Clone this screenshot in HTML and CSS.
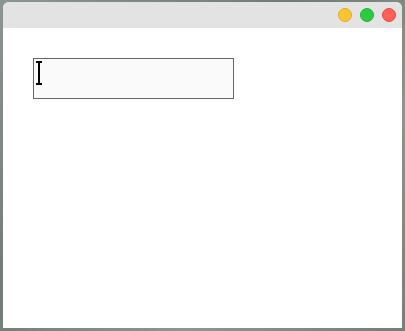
FILE: index.html
```html
<!DOCTYPE html>
<html lang="en">
<head>
  <meta charset="UTF-8">
  <meta name="viewport" content="width=device-width, initial-scale=1">
  <title>Text Field</title>
  <link rel="stylesheet" href="styles.css">
</head>
<body>
  <div class="window">
    <div class="titlebar">
      <span class="light light-yellow"></span>
      <span class="light light-green"></span>
      <span class="light light-red"></span>
    </div>
    <div class="content">
      <div class="field">
        <svg class="caret" width="6" height="24" viewBox="0 0 6 24">
          <path d="M0 1h6M3 1v22M0 23h6" stroke="#000" stroke-width="2" fill="none"/>
        </svg>
      </div>
    </div>
  </div>
</body>
</html>
```

FILE: styles.css
```css
html, body {
  height: 100%;
}

body {
  margin: 0;
  background: linear-gradient(135deg, #8a9690, #6f7d76 40%, #8d968e 70%, #737f79);
  font-family: 'Liberation Sans', Arial, sans-serif;
}

.window {
  margin: 2px 3px 0 3px;
  width: 399px;
  height: 326px;
  background: #ffffff;
  border-radius: 6px 6px 0 0;
  overflow: hidden;
  display: flex;
  flex-direction: column;
}

.titlebar {
  height: 26px;
  background: #e3e3e3;
  display: flex;
  align-items: center;
  justify-content: flex-end;
  gap: 8px;
  padding-right: 6px;
}

.light {
  width: 14px;
  height: 14px;
  border-radius: 50%;
  box-sizing: border-box;
}

.light-yellow {
  background: #fec42e;
  border: 1px solid #e3a927;
}

.light-green {
  background: #2acb40;
  border: 1px solid #24b13a;
}

.light-red {
  background: #fe5f57;
  border: 1px solid #e2473f;
}

.content {
  flex: 1;
  padding: 30px;
}

/* text field: 201x41 outer box */
.field {
  width: 197px;
  height: 37px;
  border: 1px solid #666666;
  background: #fafafa;
  display: flex;
  align-items: flex-start;
  padding: 2px 0 0 2px;
}

.caret {
  display: block;
}
```
